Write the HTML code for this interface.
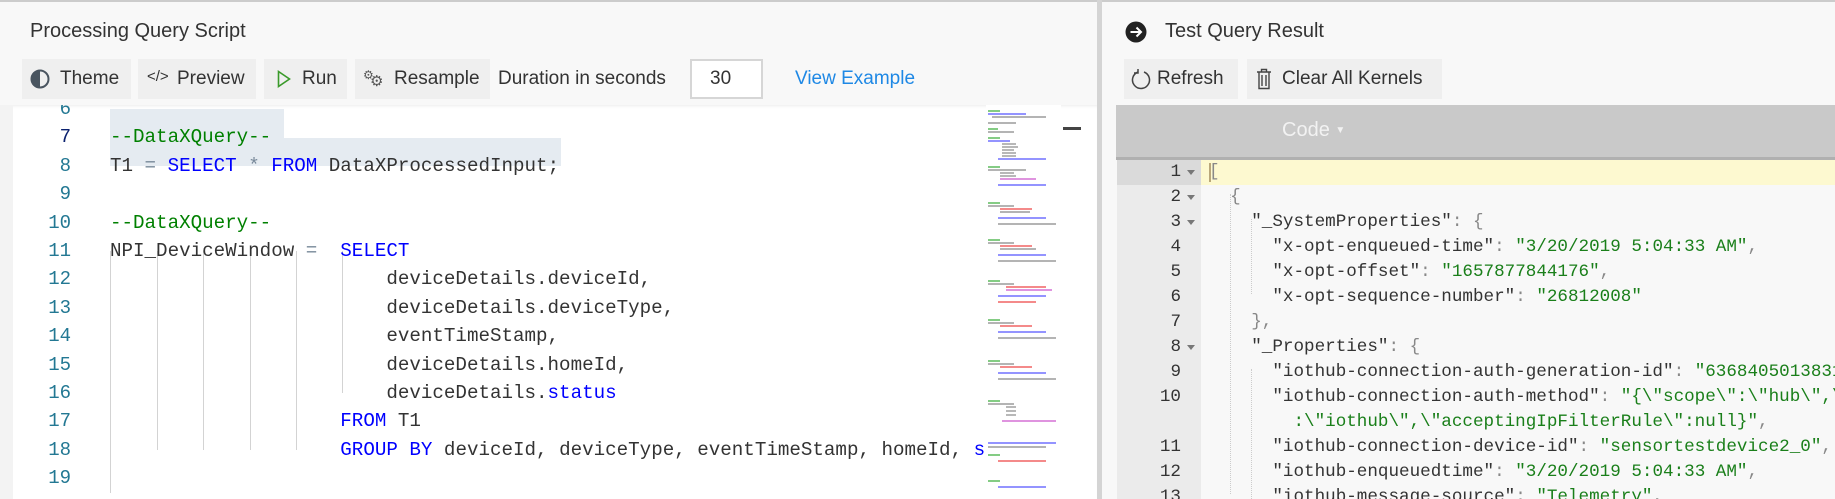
<!DOCTYPE html>
<html><head><meta charset="utf-8"><style>
*{margin:0;padding:0;box-sizing:border-box}
body{width:1835px;height:499px;overflow:hidden;background:#f8f8f8;position:relative;font-family:"Liberation Sans",sans-serif;color:#333}
.a{position:absolute}
.btn{position:absolute;top:59px;height:40px;background:#efefef;font-size:19px;line-height:40px;color:#333;white-space:nowrap}
.title{position:absolute;top:20px;font-size:20px;color:#333;white-space:nowrap}
.lc{position:absolute;left:0;width:71px;text-align:right;color:#237893;font-family:"Liberation Mono",monospace;font-size:19px}
.code{font-family:"Liberation Mono",monospace;font-size:19.2px;white-space:pre}
.ln{position:absolute;height:28.4px;line-height:28.4px}
.k{color:#0000ff}.c{color:#008000}.o{color:#778899}
.g{position:absolute;width:1px;background:#d3d3d3}
.rc{font-family:"Liberation Mono",monospace;font-size:17.6px;white-space:pre}
.rl{position:absolute;left:0;height:25px;line-height:25px;width:100%}
.rn{position:absolute;left:1117px;width:64px;text-align:right;color:#333}
.ar{position:absolute;left:1187px;top:10px;width:0;height:0;border-left:4px solid transparent;border-right:4px solid transparent;border-top:5px solid #777}
.s{color:#1a7f1a}.p{color:#888}
</style></head><body>
<div class="a" style="left:0;top:0;width:1835px;height:2px;background:#ccc"></div>

<!-- LEFT PANEL -->
<div class="title" style="left:30px">Processing Query Script</div>
<div class="btn" style="left:22px;width:109px">
 <svg class="a" style="left:8px;top:10px" width="20" height="20" viewBox="0 0 20 20"><circle cx="10" cy="10" r="8.5" fill="none" stroke="#4a5560" stroke-width="2"/><path d="M10 1.5 A8.5 8.5 0 0 0 10 18.5Z" fill="#4a5560"/></svg>
 <span class="a" style="left:38px">Theme</span></div>
<div class="btn" style="left:138px;width:118px">
 <span class="a" style="left:9px;font-size:15px;top:-2px">&lt;/&gt;</span>
 <span class="a" style="left:39px">Preview</span></div>
<div class="btn" style="left:264px;width:83px">
 <svg class="a" style="left:13px;top:11px" width="14" height="18" viewBox="0 0 14 18"><path d="M1.5 1.5 L12.5 9 L1.5 16.5Z" fill="none" stroke="#3a9a2a" stroke-width="1.6"/></svg>
 <span class="a" style="left:38px">Run</span></div>
<div class="btn" style="left:355px;width:135px">
 <span class="a" style="left:8px;top:-4px;font-size:12px;color:#555">⚙</span>
 <span class="a" style="left:15px;top:3px;font-size:15px;color:#555">⚙</span>
 <span class="a" style="left:39px">Resample</span></div>
<div class="a" style="left:498px;top:59px;height:40px;line-height:40px;font-size:19px;color:#333">Duration in seconds</div>
<div class="a" style="left:690px;top:59px;width:73px;height:40px;background:#fff;border:2px solid #d6d6d6;font-size:19px;line-height:36px;padding-left:18px;color:#333">30</div>
<div class="a" style="left:795px;top:59px;height:40px;line-height:40px;font-size:19px;color:#1e88e5">View Example</div>

<!-- editor -->
<div class="a" style="left:0;top:105px;width:1097px;height:394px;background:#fff;overflow:hidden;box-shadow:inset 0 3px 3px -2px rgba(0,0,0,.08)">
 <div class="a" style="left:0;top:0;width:13px;height:394px;background:#f3f3f3"></div>
 <div class="a code" style="left:0;top:-10px;width:1097px;height:420px">
  <div class="a" style="left:110px;top:14px;width:174px;height:29px;background:#e5ebf1"></div>
  <div class="a" style="left:110px;top:43px;width:451px;height:28px;background:#e5ebf1"></div>
  <div class="g" style="left:110px;top:156px;height:242px"></div>
  <div class="g" style="left:157px;top:156px;height:199px"></div>
  <div class="g" style="left:203px;top:156px;height:199px"></div>
  <div class="g" style="left:250px;top:156px;height:199px"></div>
  <div class="g" style="left:296px;top:156px;height:199px"></div>
  <div class="g" style="left:342px;top:156px;height:142px"></div>
  <div class="lc ln" style="top:0">6</div>
  <div class="lc ln" style="top:28.4px;color:#0b216f">7</div>
  <div class="lc ln" style="top:56.8px">8</div>
  <div class="lc ln" style="top:85.2px">9</div>
  <div class="lc ln" style="top:113.6px">10</div>
  <div class="lc ln" style="top:142px">11</div>
  <div class="lc ln" style="top:170.4px">12</div>
  <div class="lc ln" style="top:198.8px">13</div>
  <div class="lc ln" style="top:227.2px">14</div>
  <div class="lc ln" style="top:255.6px">15</div>
  <div class="lc ln" style="top:284px">16</div>
  <div class="lc ln" style="top:312.4px">17</div>
  <div class="lc ln" style="top:340.8px">18</div>
  <div class="lc ln" style="top:369.2px">19</div>
  <div class="ln" style="left:110px;top:28.4px"><span class="c">--DataXQuery--</span></div>
  <div class="ln" style="left:110px;top:56.8px">T1 <span class="o">=</span> <span class="k">SELECT</span> <span class="o">*</span> <span class="k">FROM</span> DataXProcessedInput;</div>
  <div class="ln" style="left:110px;top:113.6px"><span class="c">--DataXQuery--</span></div>
  <div class="ln" style="left:110px;top:142px">NPI_DeviceWindow <span class="o">=</span>  <span class="k">SELECT</span></div>
  <div class="ln" style="left:110px;top:170.4px">                        deviceDetails.deviceId,</div>
  <div class="ln" style="left:110px;top:198.8px">                        deviceDetails.deviceType,</div>
  <div class="ln" style="left:110px;top:227.2px">                        eventTimeStamp,</div>
  <div class="ln" style="left:110px;top:255.6px">                        deviceDetails.homeId,</div>
  <div class="ln" style="left:110px;top:284px">                        deviceDetails.<span class="k">status</span></div>
  <div class="ln" style="left:110px;top:312.4px">                    <span class="k">FROM</span> T1</div>
  <div class="ln" style="left:110px;top:340.8px;width:876px;overflow:hidden">                    <span class="k">GROUP BY</span> deviceId, deviceType, eventTimeStamp, homeId, <span class="k">status</span></div>
 </div>
 <!-- minimap -->
 <div class="a" style="left:986px;top:0;width:75px;height:394px;background:#fff;overflow:hidden">
  <svg width="75" height="394">
   <g stroke-width="1.2">
    <line x1="2" y1="6" x2="14" y2="6" stroke="#3a3"/><line x1="2" y1="9" x2="40" y2="9" stroke="#55f"/><line x1="6" y1="12" x2="60" y2="12" stroke="#888"/>
    <line x1="2" y1="18" x2="30" y2="18" stroke="#888"/><line x1="2" y1="24" x2="12" y2="24" stroke="#3a3"/><line x1="2" y1="27" x2="28" y2="27" stroke="#888"/>
    <line x1="2" y1="33" x2="14" y2="33" stroke="#3a3"/><line x1="2" y1="36" x2="24" y2="36" stroke="#55f"/>
    <line x1="16" y1="39" x2="30" y2="39" stroke="#888"/><line x1="16" y1="42" x2="32" y2="42" stroke="#888"/><line x1="16" y1="45" x2="28" y2="45" stroke="#888"/><line x1="16" y1="48" x2="30" y2="48" stroke="#888"/><line x1="16" y1="51" x2="30" y2="51" stroke="#888"/><line x1="12" y1="54" x2="60" y2="54" stroke="#55f"/>
    <line x1="2" y1="62" x2="14" y2="62" stroke="#3a3"/><line x1="2" y1="65" x2="40" y2="65" stroke="#888"/><line x1="14" y1="68" x2="28" y2="68" stroke="#888"/><line x1="14" y1="71" x2="30" y2="71" stroke="#888"/><line x1="14" y1="74" x2="50" y2="74" stroke="#c5c"/><line x1="12" y1="80" x2="60" y2="80" stroke="#55f"/>
   </g>
   <g stroke-width="1.2">
    <line x1="2" y1="98" x2="14" y2="98" stroke="#3a3"/><line x1="2" y1="101" x2="28" y2="101" stroke="#888"/><line x1="14" y1="104" x2="46" y2="104" stroke="#e44"/><line x1="14" y1="107" x2="44" y2="107" stroke="#888"/><line x1="12" y1="113" x2="60" y2="113" stroke="#55f"/><line x1="12" y1="119" x2="70" y2="119" stroke="#888"/>
    <line x1="2" y1="135" x2="14" y2="135" stroke="#3a3"/><line x1="2" y1="138" x2="28" y2="138" stroke="#888"/><line x1="14" y1="141" x2="46" y2="141" stroke="#e44"/><line x1="14" y1="144" x2="50" y2="144" stroke="#888"/><line x1="12" y1="150" x2="60" y2="150" stroke="#55f"/><line x1="12" y1="156" x2="70" y2="156" stroke="#888"/>
    <line x1="2" y1="176" x2="14" y2="176" stroke="#3a3"/><line x1="2" y1="179" x2="28" y2="179" stroke="#888"/><line x1="20" y1="182" x2="60" y2="182" stroke="#e44"/><line x1="20" y1="185" x2="66" y2="185" stroke="#c5c"/><line x1="12" y1="191" x2="60" y2="191" stroke="#55f"/><line x1="12" y1="197" x2="50" y2="197" stroke="#e44"/>
    <line x1="2" y1="215" x2="14" y2="215" stroke="#3a3"/><line x1="2" y1="218" x2="28" y2="218" stroke="#888"/><line x1="14" y1="221" x2="46" y2="221" stroke="#e44"/><line x1="12" y1="227" x2="60" y2="227" stroke="#55f"/><line x1="12" y1="233" x2="70" y2="233" stroke="#888"/>
    <line x1="2" y1="256" x2="14" y2="256" stroke="#3a3"/><line x1="2" y1="259" x2="28" y2="259" stroke="#888"/><line x1="14" y1="262" x2="46" y2="262" stroke="#e44"/><line x1="12" y1="268" x2="60" y2="268" stroke="#55f"/><line x1="12" y1="274" x2="70" y2="274" stroke="#888"/>
    <line x1="2" y1="296" x2="14" y2="296" stroke="#3a3"/><line x1="2" y1="299" x2="28" y2="299" stroke="#888"/><line x1="20" y1="302" x2="30" y2="302" stroke="#888"/><line x1="20" y1="306" x2="30" y2="306" stroke="#888"/><line x1="20" y1="310" x2="30" y2="310" stroke="#888"/><line x1="16" y1="316" x2="70" y2="316" stroke="#c5c"/>
    <line x1="2" y1="338" x2="70" y2="338" stroke="#55f"/><line x1="2" y1="342" x2="60" y2="342" stroke="#888"/><line x1="2" y1="350" x2="14" y2="350" stroke="#3a3"/><line x1="12" y1="356" x2="60" y2="356" stroke="#e44"/><line x1="2" y1="376" x2="14" y2="376" stroke="#3a3"/><line x1="12" y1="382" x2="60" y2="382" stroke="#55f"/>
   </g>
  </svg>
 </div>
 <div class="a" style="left:1063px;top:22px;width:18px;height:3px;background:#444"></div>
</div>
<div class="a" style="left:1097px;top:0;width:5px;height:499px;background:#d4d4d4"></div>

<!-- RIGHT PANEL -->
<svg class="a" style="left:1125px;top:21px" width="22" height="22" viewBox="0 0 22 22"><circle cx="11" cy="11" r="10.5" fill="#222"/><path d="M5.5 11 H15.5 M11.5 6.5 L16 11 L11.5 15.5" fill="none" stroke="#fff" stroke-width="2"/></svg>
<div class="title" style="left:1165px">Test Query Result</div>
<div class="btn" style="left:1124px;width:114px">
 <svg class="a" style="left:7px;top:9px" width="20" height="23" viewBox="0 0 20 23"><path d="M7 4 A8.5 8.5 0 1 0 13 4" fill="none" stroke="#444" stroke-width="1.5"/><path d="M7 1 V5 H3" fill="none" stroke="#444" stroke-width="1.5"/></svg>
 <span class="a" style="left:33px">Refresh</span></div>
<div class="btn" style="left:1247px;width:195px">
 <svg class="a" style="left:9px;top:9px" width="16" height="22" viewBox="0 0 16 22"><path d="M1 4 H15 M5.5 4 V1.5 H10.5 V4 M3 4 V20.5 H13 V4 M6 7 V18 M10 7 V18" fill="none" stroke="#444" stroke-width="1.4"/></svg>
 <span class="a" style="left:35px">Clear All Kernels</span></div>

<div class="a" style="left:1116px;top:105px;width:719px;height:52px;background:#c9c9c9"></div>
<div class="a" style="left:1116px;top:157px;width:719px;height:3px;background:#b0b0b0"></div>
<div class="a" style="left:1282px;top:119px;font-size:20px;color:#f2f2f2">Code <span style="font-size:10px;position:relative;top:-3px">▼</span></div>

<div class="a rc" style="left:0;top:160px;width:1835px;height:339px;overflow:hidden">
 <div class="a" style="left:1117px;top:0;width:84px;height:339px;background:#ebebeb"></div>
 <div class="a" style="left:1117px;top:0;width:84px;height:25px;background:#dadada"></div>
 <div class="a" style="left:1201px;top:0;width:634px;height:25px;background:#fdf9d0"></div>
 <div class="a" style="left:1209px;top:3px;width:2px;height:19px;background:#b9a77a"></div>
 <div class="a" style="left:1230px;top:34px;width:0;height:300px;border-left:1px dotted #ccc"></div>
 <div class="a" style="left:1251px;top:59px;width:0;height:75px;border-left:1px dotted #ccc"></div>
 <div class="a" style="left:1251px;top:209px;width:0;height:130px;border-left:1px dotted #ccc"></div>
 <div class="rl" style="top:0"><span class="rn">1</span><span class="ar"></span><span class="a p" style="left:1209px">[</span></div>
 <div class="rl" style="top:25px"><span class="rn">2</span><span class="ar"></span><span class="a p" style="left:1209px">  {</span></div>
 <div class="rl" style="top:50px"><span class="rn">3</span><span class="ar"></span><span class="a" style="left:1209px">    "_SystemProperties"<span class="p">: {</span></span></div>
 <div class="rl" style="top:75px"><span class="rn">4</span><span class="a" style="left:1209px">      "x-opt-enqueued-time"<span class="p">: </span><span class="s">"3/20/2019 5:04:33 AM"</span><span class="p">,</span></span></div>
 <div class="rl" style="top:100px"><span class="rn">5</span><span class="a" style="left:1209px">      "x-opt-offset"<span class="p">: </span><span class="s">"1657877844176"</span><span class="p">,</span></span></div>
 <div class="rl" style="top:125px"><span class="rn">6</span><span class="a" style="left:1209px">      "x-opt-sequence-number"<span class="p">: </span><span class="s">"26812008"</span></span></div>
 <div class="rl" style="top:150px"><span class="rn">7</span><span class="a p" style="left:1209px">    },</span></div>
 <div class="rl" style="top:175px"><span class="rn">8</span><span class="ar"></span><span class="a" style="left:1209px">    "_Properties"<span class="p">: {</span></span></div>
 <div class="rl" style="top:200px"><span class="rn">9</span><span class="a" style="left:1209px">      "iothub-connection-auth-generation-id"<span class="p">: </span><span class="s">"636840501383128"</span></span></div>
 <div class="rl" style="top:225px"><span class="rn">10</span><span class="a" style="left:1209px">      "iothub-connection-auth-method"<span class="p">: </span><span class="s">"{\"scope\":\"hub\",\"type\"</span></span></div>
 <div class="rl" style="top:250px"><span class="a" style="left:1209px"><span class="s">        :\"iothub\",\"acceptingIpFilterRule\":null}"</span><span class="p">,</span></span></div>
 <div class="rl" style="top:275px"><span class="rn">11</span><span class="a" style="left:1209px">      "iothub-connection-device-id"<span class="p">: </span><span class="s">"sensortestdevice2_0"</span><span class="p">,</span></span></div>
 <div class="rl" style="top:300px"><span class="rn">12</span><span class="a" style="left:1209px">      "iothub-enqueuedtime"<span class="p">: </span><span class="s">"3/20/2019 5:04:33 AM"</span><span class="p">,</span></span></div>
 <div class="rl" style="top:325px"><span class="rn">13</span><span class="a" style="left:1209px">      "iothub-message-source"<span class="p">: </span><span class="s">"Telemetry"</span><span class="p">,</span></span></div>
</div>
</body></html>
